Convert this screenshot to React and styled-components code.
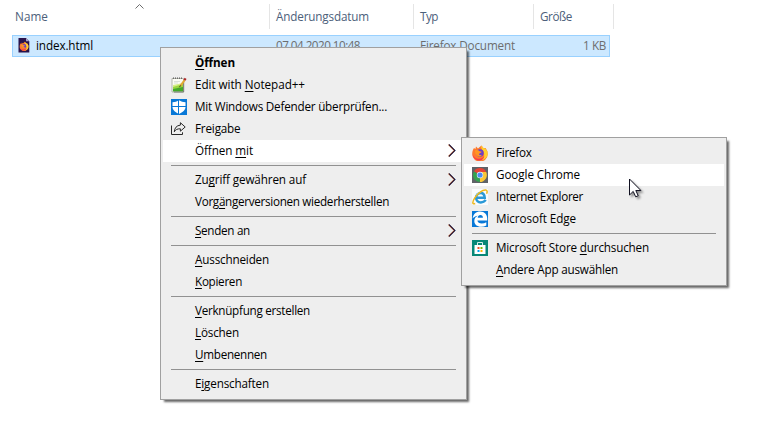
import React, { useLayoutEffect, useRef, useState } from "react";
import styled, { createGlobalStyle, css } from "styled-components";

const GlobalStyle = createGlobalStyle`
  * { box-sizing: border-box; }
  body {
    margin: 0;
    background: #fff;
    overflow: hidden;
    font-family: "Open Sans", "Noto Sans", sans-serif;
    font-size: 11.7px;
    line-height: 16px;
    color: #000;
  }
`;

const Page = styled.main`
  position: relative;
  width: 782px;
  height: 434px;
  background: #fff;
  cursor: default;
`;

const columns = css`
  display: grid;
  grid-template-columns: 258px 144px 120px 80px;
  margin-left: 12px;
`;

const HeaderRow = styled.header`
  ${columns}
  position: relative;
  padding-top: 4px;
  height: 35px;
`;

const HeaderCell = styled.div`
  height: 25px;
  padding: 4px 0 0 ${(p) => (p.$first ? 3 : 6)}px;
  border-right: 1px solid #e5e5e5;
  color: #4c607a;
`;

const SortArrow = styled.svg`
  position: absolute;
  left: 122px;
  top: 3px;
`;

const FileRow = styled.div`
  ${columns}
  width: 598px;
  height: 22px;
  grid-template-columns: 257px 144px 120px 1fr;
  background: #cce8ff;
  border: 1px solid #99d1ff;
`;

const FileCell = styled.div`
  display: flex;
  align-items: center;
  justify-content: ${(p) => (p.$end ? "flex-end" : "flex-start")};
  gap: 4px;
  padding: 0 ${(p) => (p.$end ? 3 : 0)}px 2px ${(p) => (p.$name ? 3 : 6)}px;
  color: ${(p) => (p.$name ? "#000" : "#6d6d6d")};
`;

const Menu = styled.nav`
  position: absolute;
  left: ${(p) => p.$x}px;
  top: ${(p) => p.$y}px;
  width: ${(p) => p.$w}px;
  padding: 4px 2px;
  background: #eee;
  border: 1px solid #a0a0a0;
  box-shadow: 3px 3px 2px -1px rgba(0, 0, 0, 0.6);
`;

const Item = styled.div`
  display: grid;
  grid-template-columns: 24px 1fr 16px;
  align-items: center;
  height: 22px;
  padding: 0 0 0 8px;
  background: ${(p) => (p.$active ? "#fff" : "transparent")};
  font-weight: ${(p) => (p.$bold ? 700 : 400)};

  & > span:nth-child(2) {
    margin-bottom: 2px;
  }
`;

const IconSlot = styled.span`
  display: flex;
  width: 16px;
  height: 16px;
`;

const Divider = styled.hr`
  height: 1px;
  margin: 3px 8px;
  border: 0;
  background: #919191;
`;

const Text = styled.span`
  display: block;
  justify-self: start;
  width: max-content;
  white-space: pre;
`;

const Key = styled.span`
  text-decoration: underline;
  text-decoration-thickness: 1px;
  text-underline-offset: 2px;
  text-decoration-skip-ink: none;
`;

const Pointer = styled.svg`
  position: absolute;
  left: 629px;
  top: 178px;
  filter: drop-shadow(2px 2px 1px rgba(0, 0, 0, 0.4));
`;

/* Spreads the letters so that the label takes the given width. "_" marks the access key. */
function Label({ text, width }) {
  const ref = useRef(null);
  const [spacing, setSpacing] = useState(0);
  const at = text.indexOf("_");
  const plain = text.replace("_", "");
  useLayoutEffect(() => {
    const el = ref.current;
    el.style.letterSpacing = "0px";
    const natural = el.getBoundingClientRect().width;
    const next = (width - natural) / plain.length;
    el.style.letterSpacing = `${next}px`;
    setSpacing(next);
  }, [plain, width]);
  return (
    <Text ref={ref} style={{ letterSpacing: `${spacing}px` }}>
      {at < 0 ? text : <>{plain.slice(0, at)}<Key>{plain[at]}</Key>{plain.slice(at + 1)}</>}
    </Text>
  );
}

const Svg = (props) => <svg width="16" height="16" viewBox="0 0 16 16" {...props} />;

const Chevron = () => (
  <svg width="10" height="14" viewBox="0 0 10 14" fill="none">
    <path d="M.1.5 6.1 6.5.1 12.5" stroke="#e8883a" strokeWidth=".8" />
    <path d="M1.5.5 7.5 6.5 1.5 12.5" stroke="#3f9df0" strokeWidth=".8" />
    <path d="M.8.5 6.8 6.5.8 12.5" stroke="#3a0f1c" strokeWidth="1.1" />
  </svg>
);

const FoxShapes = () => (
  <>
    <path d="M2 3 3.4 4 4 1.5 6 3.4 9.4.4l2 2.7 2.2-.1 1.8 3.2.3 3.2A7.7 7.2 0 0 1 .3 9.3C.1 7 .7 5 2 3Z" fill="#ff7a2d" />
    <path d="m9.4.4 2 2.7 2 .5 2 3 .3 3A7.7 7.2 0 0 1 8 15.5c5-2 4.6-6.3 3.6-8.7C11 4.7 8.5 4 9.4.4Z" fill="#ffd02e" />
    <path d="M.4 8.5c1 4 4 5.5 7 5.3 2 0 4-1 5-3C12 14 10 15.7 7.5 15.6 3.7 15.5.5 12.5.4 8.5Z" fill="#f8384f" />
    <circle cx="8" cy="8" r="3.7" fill="#6940c9" />
    <path d="M3 5.6c2-1 3.4-.4 4.6.7L9.8 6.7C9 8.1 7.5 8.2 7 8.9c0 1.2 1.5 1.5 3 .8-1 2-3.2 2.2-4.7 1.1C3.8 10 2.6 7.7 3 5.6Z" fill="#ff9622" />
  </>
);

const FirefoxIcon = () => <Svg><FoxShapes /></Svg>;

const HtmlFileIcon = () => (
  <Svg>
    <path d="M2.5 1H10L13.3 4.2V15.5H2.5Z" fill="#28134c" />
    <path d="M10 1 13.3 4.2H10Z" fill="#aaa1ca" />
    <g transform="translate(3.5 4.6) scale(.57)"><FoxShapes /></g>
  </Svg>
);

const NotepadIcon = () => (
  <Svg>
    <path d="M1 1.5h11.5V15H1Z" fill="#fbfcf4" stroke="#a3a69c" strokeWidth=".8" />
    <path d="M2 8 12 6v3L2 11Z" fill="#d6ee87" />
    <path d="m2 10 10-3v4L2 13Z" fill="#9ad63f" />
    <path d="m2 12 10-2v4.5H2Z" fill="#43a929" />
    <path d="M2 1.2h10" stroke="#555" strokeWidth="1.3" strokeDasharray="1 1" />
    <path d="M3 4.5h6M3 6h4" stroke="#ccd2cc" strokeWidth=".7" />
    <path d="M12.7 4v11H3" fill="none" stroke="#71756d" strokeWidth=".9" />
    <path d="m9.4 8.8 4.2-5.6" stroke="#e3aa33" strokeWidth="2" />
    <path d="m13.4 3.2 1.2-1.8" stroke="#ad2727" strokeWidth="2.3" />
    <path d="m8.4 10.2 1.3-1.8" stroke="#4d3b20" />
  </Svg>
);

const DefenderIcon = () => (
  <Svg>
    <path d="M0 0h16v16H0Z" fill="#0878d7" />
    <path d="M1.5 3.3C4 3.2 6 2.5 8 1.3c2 1.2 4 1.9 6.5 2V8c0 3-2.7 5.3-6.5 7-3.8-1.7-6.5-4-6.5-7Z" fill="#fff" />
    <path d="M7.5 1v14M1 7.5h14" stroke="#0878d7" strokeWidth="1" />
  </Svg>
);

const ShareIcon = () => (
  <Svg fill="none" stroke="#292929" strokeWidth="1">
    <path d="M.5 4.5v9h11v-2.2" />
    <path d="M9.4 1.7 14.2 6 9.4 10.2V7.8C6.4 7.7 4.5 8.6 3.3 10.8 3.5 7.2 5.5 4.4 9.4 4.1Z" />
  </Svg>
);

const ChromeIcon = () => (
  <Svg>
    <path d="M0 0h16v16H0Z" fill="#5f6368" />
    <path d="M8 8 2 4.4A7 7 0 0 1 14.2 5H8Z" fill="#e74435" />
    <path d="M8 8V5h6.2A7 7 0 0 1 7.8 15Z" fill="#fbc735" />
    <path d="M8 8 7.8 15A7 7 0 0 1 2 4.4Z" fill="#34a350" />
    <circle cx="8" cy="8" r="3.2" fill="#e8f0fb" />
    <circle cx="8" cy="8" r="2.6" fill="#4c8cf0" />
  </Svg>
);

const ExplorerIcon = () => (
  <Svg>
    <path d="M0 0h16v16H0Z" fill="#f9fbfd" />
    <path d="M5 8.7h7.7C12.5 5.6 11.2 4 8.9 4c-2.8 0-4.8 2-4.8 4.8 0 2.7 2 4.6 4.7 4.6 2.1 0 3.7-.8 4.9-2.5" fill="none" stroke="#2999d7" strokeWidth="2.5" />
    <path d="M4.1 6.2c1-2 3-3 5-2.6" fill="none" stroke="#8bd8fa" />
    <path d="M3.2 14.5C.1 16 .2 12.7 2.8 8.8 5.7 4.6 10.6.6 13.8 1.1c1.8.3 1.5 2.2.8 3.7" fill="none" stroke="#edb81e" strokeWidth="1.5" />
  </Svg>
);

const EdgeIcon = () => (
  <Svg>
    <path d="M0 0h16v16H0Z" fill="#0878d7" />
    <path d="M.6 7.6C1.2 3.2 4.2.6 8.1.6c4.5 0 7.1 3 7.1 7v2H5.4c.2 2 2 2.9 4.3 2.9 1.7 0 3.2-.4 4.6-1.2v3.2c-1.5.8-3.2 1.2-5.1 1.2-4.2 0-6.9-2.4-6.9-5.8 0-2.3 1.3-4 3.4-5.1C3.6 5 1.8 6.1.6 7.6Zm5.1-.9h5.2c0-1.6-.8-2.6-2.5-2.6-1.5 0-2.5 1-2.7 2.6Z" fill="#fff" />
  </Svg>
);

const StoreIcon = () => (
  <Svg>
    <path d="M0 0h16v16H0Z" fill="#078777" />
    <path d="M5.5 5.5v-3h5v3" fill="none" stroke="#d5efeb" strokeWidth="1" />
    <path d="M2.5 5h11v9h-11Z" fill="#fff" />
    <path d="M5.5 7h2v2h-2Z" fill="#f25022" />
    <path d="M8.5 7h2v2h-2Z" fill="#7fba00" />
    <path d="M5.5 10h2v2h-2Z" fill="#00a4ef" />
    <path d="M8.5 10h2v2h-2Z" fill="#ffb900" />
  </Svg>
);

const contextItems = [
  { text: "_Öffnen", width: 40, bold: true },
  { text: "Edit with _Notepad++", width: 110, icon: NotepadIcon },
  { text: "Mit Windows Defender überprüfen...", width: 192, icon: DefenderIcon },
  { text: "Freigabe", width: 45.5, icon: ShareIcon },
  { text: "Öffnen _mit", width: 58, arrow: true, active: true },
  null,
  { text: "Zu_griff gewähren auf", width: 111, arrow: true },
  { text: "Vorg_ängerversionen wiederherstellen", width: 194 },
  null,
  { text: "_Senden an", width: 55, arrow: true },
  null,
  { text: "_Ausschneiden", width: 74 },
  { text: "_Kopieren", width: 47 },
  null,
  { text: "_Verknüpfung erstellen", width: 115 },
  { text: "_Löschen", width: 44 },
  { text: "_Umbenennen", width: 72 },
  null,
  { text: "E_igenschaften", width: 74 },
];

const openWithItems = [
  { text: "Firefox", width: 35.5, icon: FirefoxIcon },
  { text: "Google Chrome", width: 84, icon: ChromeIcon, active: true },
  { text: "Internet Explorer", width: 87, icon: ExplorerIcon },
  { text: "Microsoft Edge", width: 80, icon: EdgeIcon },
  null,
  { text: "Microsoft Store _durchsuchen", width: 153, icon: StoreIcon },
  { text: "_Andere App auswählen", width: 122 },
];

function ContextMenu({ x, y, w, items }) {
  return (
    <Menu $x={x} $y={y} $w={w}>
      {items.map((item, i) =>
        item ? (
          <Item key={item.text} $active={item.active} $bold={item.bold}>
            <IconSlot>{item.icon && <item.icon />}</IconSlot>
            <Label text={item.text} width={item.width} />
            {item.arrow && <Chevron />}
          </Item>
        ) : (
          <Divider key={i} />
        )
      )}
    </Menu>
  );
}

export default function App() {
  return (
    <Page>
      <GlobalStyle />
      <HeaderRow>
        <HeaderCell $first><Label text="Name" width={33} /></HeaderCell>
        <HeaderCell><Label text="Änderungsdatum" width={93} /></HeaderCell>
        <HeaderCell><Label text="Typ" width={18} /></HeaderCell>
        <HeaderCell><Label text="Größe" width={32} /></HeaderCell>
        <SortArrow width="11" height="7" viewBox="0 0 11 7" fill="none" stroke="#6d6d6d">
          <path d="m1.5 5.5 4-4 4 4" />
        </SortArrow>
      </HeaderRow>
      <FileRow>
        <FileCell $name><HtmlFileIcon /><Label text="index.html" width={57} /></FileCell>
        <FileCell><Label text="07.04.2020 10:48" width={84} /></FileCell>
        <FileCell><Label text="Firefox Document" width={95} /></FileCell>
        <FileCell $end><Label text="1 KB" width={23} /></FileCell>
      </FileRow>
      <ContextMenu x={160} y={47} w={307} items={contextItems} />
      <ContextMenu x={461} y={137} w={266} items={openWithItems} />
      <Pointer width="13" height="20" viewBox="0 0 13 20">
        <path d="M.5 1v16l3.7-3.6 2.5 5.4 2.5-1.1-2.4-5.2h5.1Z" fill="#fff" stroke="#101020" strokeWidth="1" />
      </Pointer>
    </Page>
  );
}
